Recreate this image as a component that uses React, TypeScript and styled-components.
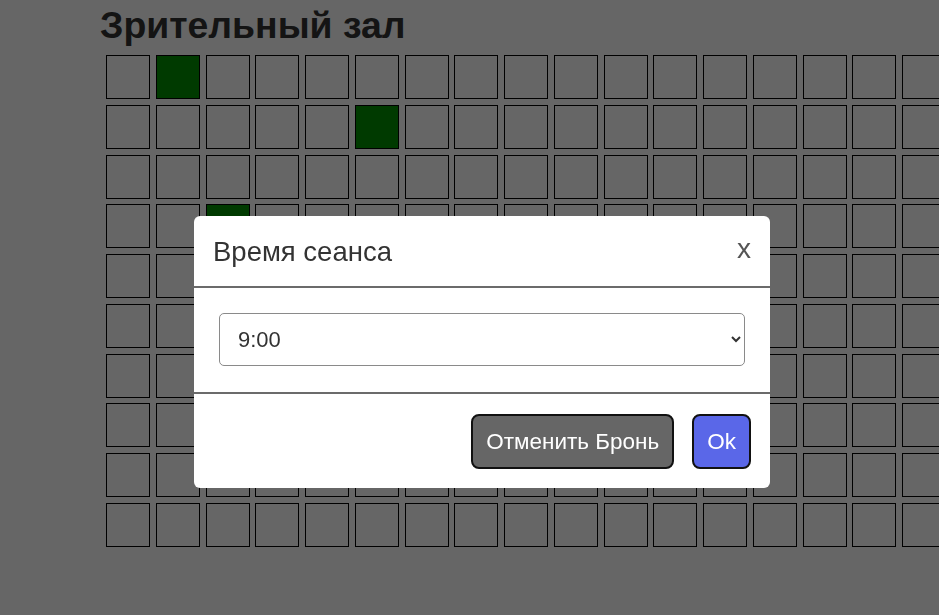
import React from "react";
import styled, { createGlobalStyle } from "styled-components";

const Global = createGlobalStyle`
  html, body {
    margin: 0;
    padding: 0;
    background: #ffffff;
    overflow: hidden;
    font-family: "Liberation Sans", Arial, sans-serif;
  }
`;

const Page = styled.div`
  width: 939px;
  height: 615px;
  padding: 0 0 0 100px;
  box-sizing: border-box;
  overflow: hidden;
`;

const Title = styled.h1`
  margin: 0;
  padding-top: 4px;
  font-size: 37.4px;
  line-height: 43px;
  font-weight: 700;
  color: #333;
  white-space: nowrap;
`;

const Hall = styled.div`
  display: grid;
  grid-template-columns: repeat(20, 44px);
  grid-auto-rows: 44px;
  gap: 5.75px;
  margin: 8px 0 0 6px;
  width: max-content;
`;

const Seat = styled.div<{ $taken: boolean }>`
  box-sizing: border-box;
  border: 1px solid #000;
  background: ${(p) => (p.$taken ? "#009100" : "transparent")};
`;

const Backdrop = styled.div`
  position: fixed;
  inset: 0;
  background: rgba(0, 0, 0, 0.6);
`;

const Modal = styled.div`
  position: absolute;
  left: 194px;
  top: 216px;
  width: 576px;
  background: #fff;
  border-radius: 6px;
  overflow: hidden;
`;

const Header = styled.div`
  height: 70px;
  display: flex;
  align-items: center;
  justify-content: space-between;
  padding: 0 19px;
  border-bottom: 2px solid #6b6b6b;
`;

const ModalTitle = styled.div`
  font-size: 27.5px;
  color: #333;
  padding-top: 1px;
`;

const Close = styled.span`
  font-size: 28px;
  color: #555;
  line-height: 1;
  padding-bottom: 4px;
`;

const Body = styled.div`
  padding: 25px 25px 26px;
  border-bottom: 2px solid #6b6b6b;
`;

const Select = styled.select`
  display: block;
  width: 100%;
  height: 53px;
  box-sizing: border-box;
  border: 1px solid #8a8a8a;
  border-radius: 5px;
  background: #fff;
  padding: 0 14px;
  font-family: "Liberation Sans", Arial, sans-serif;
  font-size: 22px;
  color: #333;
`;

const Footer = styled.div`
  display: flex;
  justify-content: flex-end;
  gap: 18px;
  padding: 20px 19px 19px;
`;

const Button = styled.button<{ $primary?: boolean }>`
  height: 55px;
  padding: 0 13px;
  border: 2px solid #111;
  border-radius: 8px;
  background: ${(p) => (p.$primary ? "#5a67e8" : "#666666")};
  color: #fff;
  font-family: "Liberation Sans", Arial, sans-serif;
  font-size: 22.5px;
  cursor: pointer;
`;

const taken = new Set(["0-1", "1-5", "3-2"]);

export default function App() {
  const seats = [];
  for (let r = 0; r < 10; r++) {
    for (let c = 0; c < 20; c++) {
      seats.push(<Seat key={`${r}-${c}`} $taken={taken.has(`${r}-${c}`)} />);
    }
  }
  return (
    <>
      <Global />
      <Page>
        <Title>Зрительный зал</Title>
        <Hall>{seats}</Hall>
      </Page>
      <Backdrop>
        <Modal>
          <Header>
            <ModalTitle>Время сеанса</ModalTitle>
            <Close>x</Close>
          </Header>
          <Body>
            <Select defaultValue="9:00">
              <option>9:00</option>
              <option>12:00</option>
              <option>15:00</option>
              <option>18:00</option>
            </Select>
          </Body>
          <Footer>
            <Button>Отменить Бронь</Button>
            <Button $primary>Ok</Button>
          </Footer>
        </Modal>
      </Backdrop>
    </>
  );
}
